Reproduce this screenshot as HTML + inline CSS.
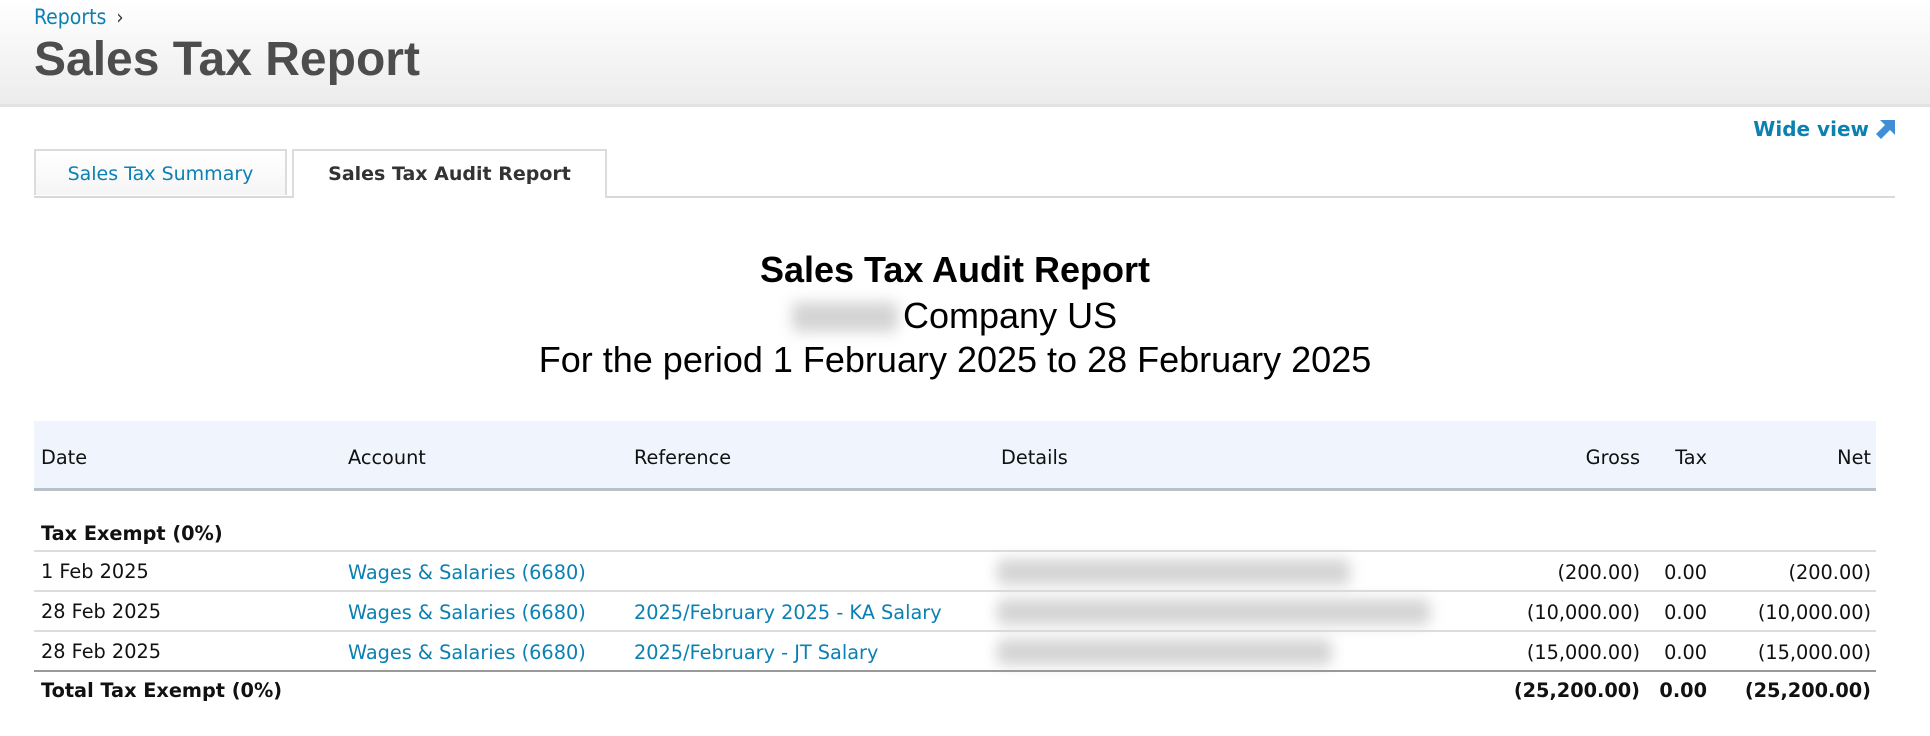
<!DOCTYPE html>
<html><head><style>
body{margin:0;width:1930px;height:736px;background:#fff;position:relative;overflow:hidden;font-family:"DejaVu Sans",Verdana,sans-serif;}
.hdr{position:absolute;left:0;top:0;width:1930px;height:104px;background:linear-gradient(#fff,#ececec);border-bottom:3px solid #e2e2e2;}
.a{position:absolute;white-space:nowrap;}
.blue{color:#0b80b3 !important;}
.tab{position:absolute;top:149px;height:47px;border:2px solid #dcdcdc;border-bottom:none;box-sizing:border-box;font-size:19px;line-height:46px;text-align:center;}
.blur{position:absolute;background:#d4d4d4;filter:blur(7px);border-radius:6px;}
.td{position:absolute;font-size:19.3px;white-space:nowrap;color:#111;}
.r{text-align:right;}
.line{position:absolute;left:34px;width:1842px;height:2px;background:#dcdcdc;}
</style></head><body>
<div class="hdr"></div>
<div class="a blue" style="left:34px;top:5px;font-size:21px;font-family:'DejaVu Sans Condensed','DejaVu Sans',sans-serif;">Reports <span style="color:#333;font-size:20px;margin-left:4px">›</span></div>
<div class="a" style="left:34px;top:32px;font-family:'Liberation Sans',sans-serif;font-weight:bold;font-size:48px;color:#4d4d4d;">Sales Tax Report</div>
<div class="a blue" style="right:61px;top:117px;font-size:20px;font-weight:bold;">Wide view</div>
<svg class="a" style="left:1876px;top:120px" width="19" height="19" viewBox="0 0 19 19"><path d="M4 0h15v15l-5-5-9 9-5-5 9-9z" fill="#3e8fd6"/></svg>
<div style="position:absolute;left:34px;top:196px;width:1861px;height:2px;background:#d9d9d9"></div>
<div class="tab blue" style="left:34px;width:253px;background:linear-gradient(#fff,#f5f5f5);height:46px;">Sales Tax Summary</div>
<div class="tab" style="left:292px;width:315px;height:49px;background:#fff;font-weight:bold;color:#333;">Sales Tax Audit Report</div>
<div class="a" style="left:-10px;width:1930px;text-align:center;top:249px;font-family:'Liberation Sans',sans-serif;font-weight:bold;font-size:36px;color:#000;">Sales Tax Audit Report</div>
<div class="blur" style="left:792px;top:302px;width:106px;height:30px;"></div>
<div class="a" style="left:903px;top:295px;font-family:'Liberation Sans',sans-serif;font-size:36px;color:#000;">Company US</div>
<div class="a" style="left:-10px;width:1930px;text-align:center;top:339px;font-family:'Liberation Sans',sans-serif;font-size:36px;color:#000;">For the period 1 February 2025 to 28 February 2025</div>
<div style="position:absolute;left:34px;top:421px;width:1842px;height:67px;background:#f0f5fd;border-bottom:3px solid #b9c0c8;"></div>
<div class="td" style="left:41px;top:446px">Date</div>
<div class="td" style="left:348px;top:446px">Account</div>
<div class="td" style="left:634px;top:446px">Reference</div>
<div class="td" style="left:1001px;top:446px">Details</div>
<div class="td r" style="right:290px;top:446px">Gross</div>
<div class="td r" style="right:223px;top:446px">Tax</div>
<div class="td r" style="right:59px;top:446px">Net</div>
<div class="td" style="left:41px;top:522px;font-weight:bold">Tax Exempt (0%)</div>
<div class="line" style="top:550px"></div>
<div class="td" style="left:41px;top:560px">1 Feb 2025</div>
<div class="td blue" style="left:348px;top:561px">Wages &amp; Salaries (6680)</div>
<div class="blur" style="left:997px;top:559px;width:353px;height:26px;"></div>
<div class="td r" style="right:290px;top:561px">(200.00)</div>
<div class="td r" style="right:223px;top:561px">0.00</div>
<div class="td r" style="right:59px;top:561px">(200.00)</div>
<div class="line" style="top:590px"></div>
<div class="td" style="left:41px;top:600px">28 Feb 2025</div>
<div class="td blue" style="left:348px;top:601px">Wages &amp; Salaries (6680)</div>
<div class="td blue" style="left:634px;top:601px">2025/February 2025 - KA Salary</div>
<div class="blur" style="left:997px;top:599px;width:433px;height:26px;"></div>
<div class="td r" style="right:290px;top:601px">(10,000.00)</div>
<div class="td r" style="right:223px;top:601px">0.00</div>
<div class="td r" style="right:59px;top:601px">(10,000.00)</div>
<div class="line" style="top:630px"></div>
<div class="td" style="left:41px;top:640px">28 Feb 2025</div>
<div class="td blue" style="left:348px;top:641px">Wages &amp; Salaries (6680)</div>
<div class="td blue" style="left:634px;top:641px">2025/February - JT Salary</div>
<div class="blur" style="left:997px;top:639px;width:335px;height:26px;"></div>
<div class="td r" style="right:290px;top:641px">(15,000.00)</div>
<div class="td r" style="right:223px;top:641px">0.00</div>
<div class="td r" style="right:59px;top:641px">(15,000.00)</div>
<div class="line" style="top:670px;background:#999;"></div>
<div class="td" style="left:41px;top:679px;font-weight:bold">Total Tax Exempt (0%)</div>
<div class="td r" style="right:290px;top:679px;font-weight:bold">(25,200.00)</div>
<div class="td r" style="right:223px;top:679px;font-weight:bold">0.00</div>
<div class="td r" style="right:59px;top:679px;font-weight:bold">(25,200.00)</div>
</body></html>
